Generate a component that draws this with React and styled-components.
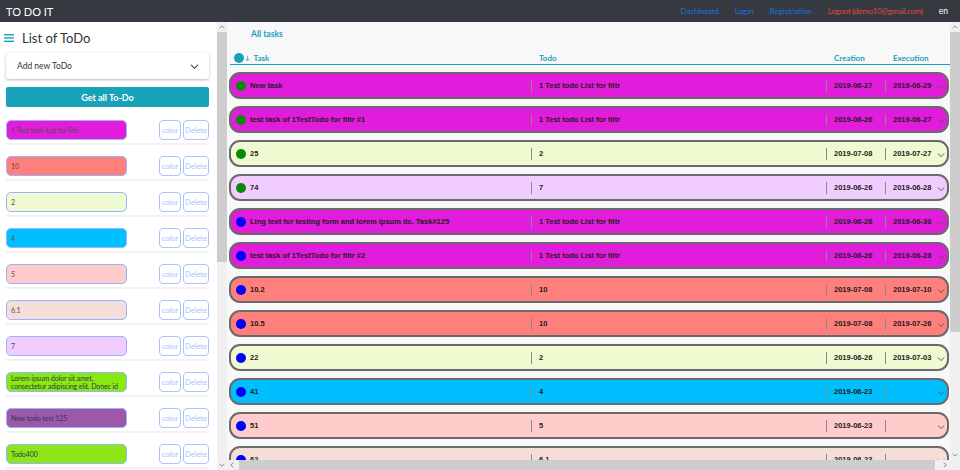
import React from 'react';
import styled, { createGlobalStyle } from 'styled-components';

const GlobalStyle = createGlobalStyle`
  html, body { margin: 0; padding: 0; height: 100%; overflow: hidden; }
  body { font-family: Lato, "Open Sans", sans-serif; background: #fff; }
  #root { height: 100%; }
  * { box-sizing: border-box; }
`;

const todos = [
  { name: '1 Test todo List for filtr', color: '#e11ddb' },
  { name: '10', color: '#ff7f7c' },
  { name: '2', color: '#f0fad0' },
  { name: '4', color: '#00bfff' },
  { name: '5', color: '#ffcccb' },
  { name: '6.1', color: '#f5ddd8' },
  { name: '7', color: '#f0cdfe' },
  { name: 'Lorem ipsum dolor sit amet, consectetur adipiscing elit. Donec id', color: '#88e80f', dark: true },
  { name: 'New todo test 125', color: '#9d58a9', dark: true },
  { name: 'Todo400', color: '#8ee619', dark: true },
];

const GREEN = '#078a07';
const BLUE = '#0000ff';
const MAG = '#e11ddb';

const tasks = [
  { task: 'New task', todo: '1 Test todo List for filtr', created: '2019-06-27', exec: '2019-06-29', color: MAG, dot: GREEN },
  { task: 'test task of 1TestTodo for filtr #1', todo: '1 Test todo List for filtr', created: '2019-06-26', exec: '2019-06-27', color: MAG, dot: GREEN },
  { task: '25', todo: '2', created: '2019-07-08', exec: '2019-07-27', color: '#f0fad0', dot: GREEN },
  { task: '74', todo: '7', created: '2019-06-26', exec: '2019-06-28', color: '#f0cdfe', dot: GREEN },
  { task: 'Ling text for testing form and lorem ipsum itc. Task#125', todo: '1 Test todo List for filtr', created: '2019-06-26', exec: '2019-06-30', color: MAG, dot: BLUE },
  { task: 'test task of 1TestTodo for filtr #2', todo: '1 Test todo List for filtr', created: '2019-06-26', exec: '2019-06-28', color: MAG, dot: BLUE },
  { task: '10.2', todo: '10', created: '2019-07-08', exec: '2019-07-10', color: '#ff7f7c', dot: BLUE },
  { task: '10.5', todo: '10', created: '2019-07-08', exec: '2019-07-26', color: '#ff7f7c', dot: BLUE },
  { task: '22', todo: '2', created: '2019-06-26', exec: '2019-07-03', color: '#f0fad0', dot: BLUE },
  { task: '41', todo: '4', created: '2019-06-23', exec: '', color: '#00bfff', dot: BLUE },
  { task: '51', todo: '5', created: '2019-06-23', exec: '', color: '#ffcccb', dot: BLUE },
  { task: '62', todo: '6.1', created: '2019-06-23', exec: '', color: '#f5ddd8', dot: BLUE },
];

const Chevron = ({ size = 8, color = '#555', dir = 'down' }) => {
  const rot = { down: 0, up: 180, left: 90, right: -90 }[dir];
  return (
    <svg width={size} height={size} viewBox="0 0 10 10" fill="none" style={{ transform: `rotate(${rot}deg)` }}>
      <path d="M1.5 3.5 L5 7 L8.5 3.5" stroke={color} strokeWidth="1.2" strokeLinecap="round" strokeLinejoin="round" />
    </svg>
  );
};

// drawn scrollbar, the page is photographed without native ones
function ScrollBar({ vertical, start, size }) {
  return (
    <Bar $vertical={vertical}>
      <ArrowBox><Chevron size={6} color="#606060" dir={vertical ? 'up' : 'left'} /></ArrowBox>
      <Track $vertical={vertical}>
        <Thumb $vertical={vertical} $start={start} $size={size} />
      </Track>
      <ArrowBox><Chevron size={6} color="#606060" dir={vertical ? 'down' : 'right'} /></ArrowBox>
    </Bar>
  );
}

export default function App() {
  return (
    <>
      <GlobalStyle />
      <Page>
        <TopBar>
          <Brand>TO DO IT</Brand>
          <Nav>
            <NavLink>Dashboard</NavLink>
            <NavLink>Login</NavLink>
            <NavLink>Registration</NavLink>
            <NavLink $logout>Logout (demo10@gmail.com)</NavLink>
            <Lang>en</Lang>
          </Nav>
        </TopBar>
        <Body>
          <Sidebar>
            <SideContent>
              <TitleRow>
                <svg width="10" height="8" viewBox="0 0 10 8">
                  <rect x="0" y="0" width="10" height="1.4" fill="#17a2b8" />
                  <rect x="0" y="3.3" width="10" height="1.4" fill="#17a2b8" />
                  <rect x="0" y="6.6" width="10" height="1.4" fill="#17a2b8" />
                </svg>
                <Title>List of ToDo</Title>
              </TitleRow>
              <AddCard>
                <span>Add new ToDo</span>
                <Chevron size={9} color="#444" />
              </AddCard>
              <GetAll>Get all To-Do</GetAll>
              <TodoList>
                {todos.map((t) => (
                  <TodoRow key={t.name}>
                    <TodoName $bg={t.color} $dark={t.dark}>{t.name}</TodoName>
                    <SmallBtn $w={22}>color</SmallBtn>
                    <SmallBtn $w={26}>Delete</SmallBtn>
                  </TodoRow>
                ))}
              </TodoList>
            </SideContent>
            <ScrollBar vertical start={0} size={230} />
          </Sidebar>
          <Main>
            <Viewport>
              <AllTasks>All tasks</AllTasks>
              <HeadRow>
                <HeadCell>
                  <SortDot />
                  <SortArrow>↓</SortArrow>
                  Task
                </HeadCell>
                <HeadCell $pad>Todo</HeadCell>
                <HeadCell $pad>Creation</HeadCell>
                <HeadCell $pad>Execution</HeadCell>
                <span />
              </HeadRow>
              {tasks.map((t, i) => (
                <TaskRow key={i} $bg={t.color}>
                  <TaskCell>
                    <Dot $c={t.dot} />
                    {t.task}
                  </TaskCell>
                  <Cell>{t.todo}</Cell>
                  <Cell>{t.created}</Cell>
                  <Cell>{t.exec}</Cell>
                  <ChevCell><Chevron size={8} color="#555" /></ChevCell>
                </TaskRow>
              ))}
            </Viewport>
            <ScrollBar vertical start={0} size={300} />
            <ScrollBar start={2} size={696} />
            <Corner />
          </Main>
        </Body>
      </Page>
    </>
  );
}

const Page = styled.div`
  height: 100vh;
  display: flex;
  flex-direction: column;
`;

const TopBar = styled.header`
  height: 22px;
  flex: none;
  background: #343a40;
  display: flex;
  align-items: center;
  justify-content: space-between;
  padding: 0 12px 0 6px;
`;

const Brand = styled.div`
  color: #fff;
  font-size: 11px;
`;

const Nav = styled.nav`
  display: flex;
  align-items: center;
  gap: 16px;
  font-size: 8px;
`;

const NavLink = styled.a`
  color: ${(p) => (p.$logout ? '#e0473c' : '#1f6fe0')};
  letter-spacing: ${(p) => (p.$logout ? '-0.25px' : '0')};
  cursor: pointer;
`;

const Lang = styled.span`
  color: #fff;
  font-size: 8.5px;
`;

const Body = styled.div`
  flex: 1;
  min-height: 0;
  display: flex;
`;

const Sidebar = styled.aside`
  width: 227px;
  flex: none;
  display: flex;
  overflow: hidden;
  background: #fff;
`;

const SideContent = styled.div`
  width: 217px;
  flex: none;
  padding: 6px 8px 0 6px;
`;

const Bar = styled.div`
  display: flex;
  flex-direction: ${(p) => (p.$vertical ? 'column' : 'row')};
  background: #f0f0f0;
  ${(p) => (p.$vertical ? 'width: 10px;' : 'height: 10px;')}
`;

const ArrowBox = styled.div`
  flex: none;
  width: 10px;
  height: 10px;
  display: flex;
  align-items: center;
  justify-content: center;
`;

const Track = styled.div`
  flex: 1;
  display: flex;
  flex-direction: ${(p) => (p.$vertical ? 'column' : 'row')};
  min-width: 0;
  min-height: 0;
`;

const Thumb = styled.div`
  background: #cdcdcd;
  ${(p) =>
    p.$vertical
      ? `width: 10px; height: ${p.$size}px; margin-top: ${p.$start}px;`
      : `height: 10px; width: ${p.$size}px; margin-left: ${p.$start}px;`}
`;

const Corner = styled.div`
  background: #f0f0f0;
`;

const TitleRow = styled.div`
  display: flex;
  align-items: center;
  gap: 8px;
  margin: 0 0 5px -2px;
  height: 20px;
`;

const Title = styled.h2`
  margin: 0;
  font-weight: 400;
  font-size: 13px;
  color: #333;
`;

const AddCard = styled.div`
  height: 26px;
  background: #fff;
  border-radius: 3px;
  box-shadow: 0 1px 3px rgba(0, 0, 0, 0.28);
  display: flex;
  align-items: center;
  justify-content: space-between;
  padding: 0 10px 0 11px;
  font-size: 8.5px;
  color: #333;
`;

const GetAll = styled.button`
  display: block;
  width: 100%;
  height: 20px;
  margin-top: 8px;
  border: none;
  border-radius: 2px;
  background: #17a2b8;
  color: #fff;
  font-family: inherit;
  font-weight: 700;
  font-size: 9px;
`;

const TodoList = styled.div`
  margin-top: 13px;
  display: flex;
  flex-direction: column;
`;

const TodoRow = styled.div`
  display: flex;
  align-items: stretch;
  gap: 2px;
  padding-bottom: 3px;
  border-bottom: 2px solid #f0f0f0;
  margin-bottom: 11px;
`;

const TodoName = styled.div`
  width: 121px;
  height: 20px;
  margin-right: auto;
  border: 1px solid #96b4ff;
  border-radius: 5px;
  background: ${(p) => p.$bg};
  color: ${(p) => (p.$dark ? '#2f3a55' : '#505050')};
  font-size: 7px;
  letter-spacing: -0.1px;
  line-height: 8px;
  padding: 0 3px 0 4px;
  display: flex;
  align-items: center;
  overflow: hidden;
`;

const SmallBtn = styled.button`
  width: ${(p) => p.$w}px;
  height: 20px;
  padding: 0;
  border: 1px solid #a8c4ff;
  border-radius: 4px;
  background: #fff;
  color: #a8c4ff;
  font-family: inherit;
  font-size: 7.5px;
`;

const Main = styled.main`
  flex: 1;
  min-width: 0;
  display: grid;
  grid-template-columns: 1fr 10px;
  grid-template-rows: 1fr 10px;
`;

const Viewport = styled.div`
  overflow: hidden;
  background: #f8f8f8;
  padding: 7px 0 0 2px;
`;

const AllTasks = styled.div`
  color: #17a2b8;
  font-weight: 700;
  font-size: 8.5px;
  padding-left: 22px;
  height: 14px;
`;

const cols = '300px 295px 59px 52px 14px';

const HeadRow = styled.div`
  display: grid;
  grid-template-columns: ${cols};
  align-items: center;
  margin: 8px 0 7px 1px;
  width: 720px;
  height: 14px;
  border-bottom: 1.5px solid #17a2b8;
  color: #17a2b8;
  font-weight: 700;
  font-size: 8px;
`;

const HeadCell = styled.div`
  display: flex;
  align-items: center;
  padding-left: ${(p) => (p.$pad ? '9px' : '4px')};
`;

const SortDot = styled.span`
  width: 10px;
  height: 10px;
  border-radius: 50%;
  background: #17a2b8;
`;

const SortArrow = styled.span`
  font-size: 6px;
  margin: 0 4px 0 1px;
`;

const TaskRow = styled.div`
  display: grid;
  grid-template-columns: ${cols};
  align-items: center;
  width: 720px;
  height: 27px;
  margin-bottom: 7px;
  border: 2px solid #6a6a6a;
  border-radius: 11px;
  background: ${(p) => p.$bg};
  font-family: "Liberation Sans", Arial, sans-serif;
  font-weight: 700;
  font-size: 7.5px;
  color: #1c1c1c;
`;

const TaskCell = styled.div`
  display: flex;
  align-items: center;
  gap: 4px;
  padding-left: 5px;
  white-space: nowrap;
`;

const Dot = styled.span`
  width: 10px;
  height: 10px;
  border-radius: 50%;
  background: ${(p) => p.$c};
  flex: none;
`;

const Cell = styled.div`
  height: 12px;
  display: flex;
  align-items: center;
  padding-left: 7px;
  border-left: 1px solid #8a8a8a;
  white-space: nowrap;
`;

const ChevCell = styled.div`
  display: flex;
  align-items: center;
  padding-top: 2px;
`;
